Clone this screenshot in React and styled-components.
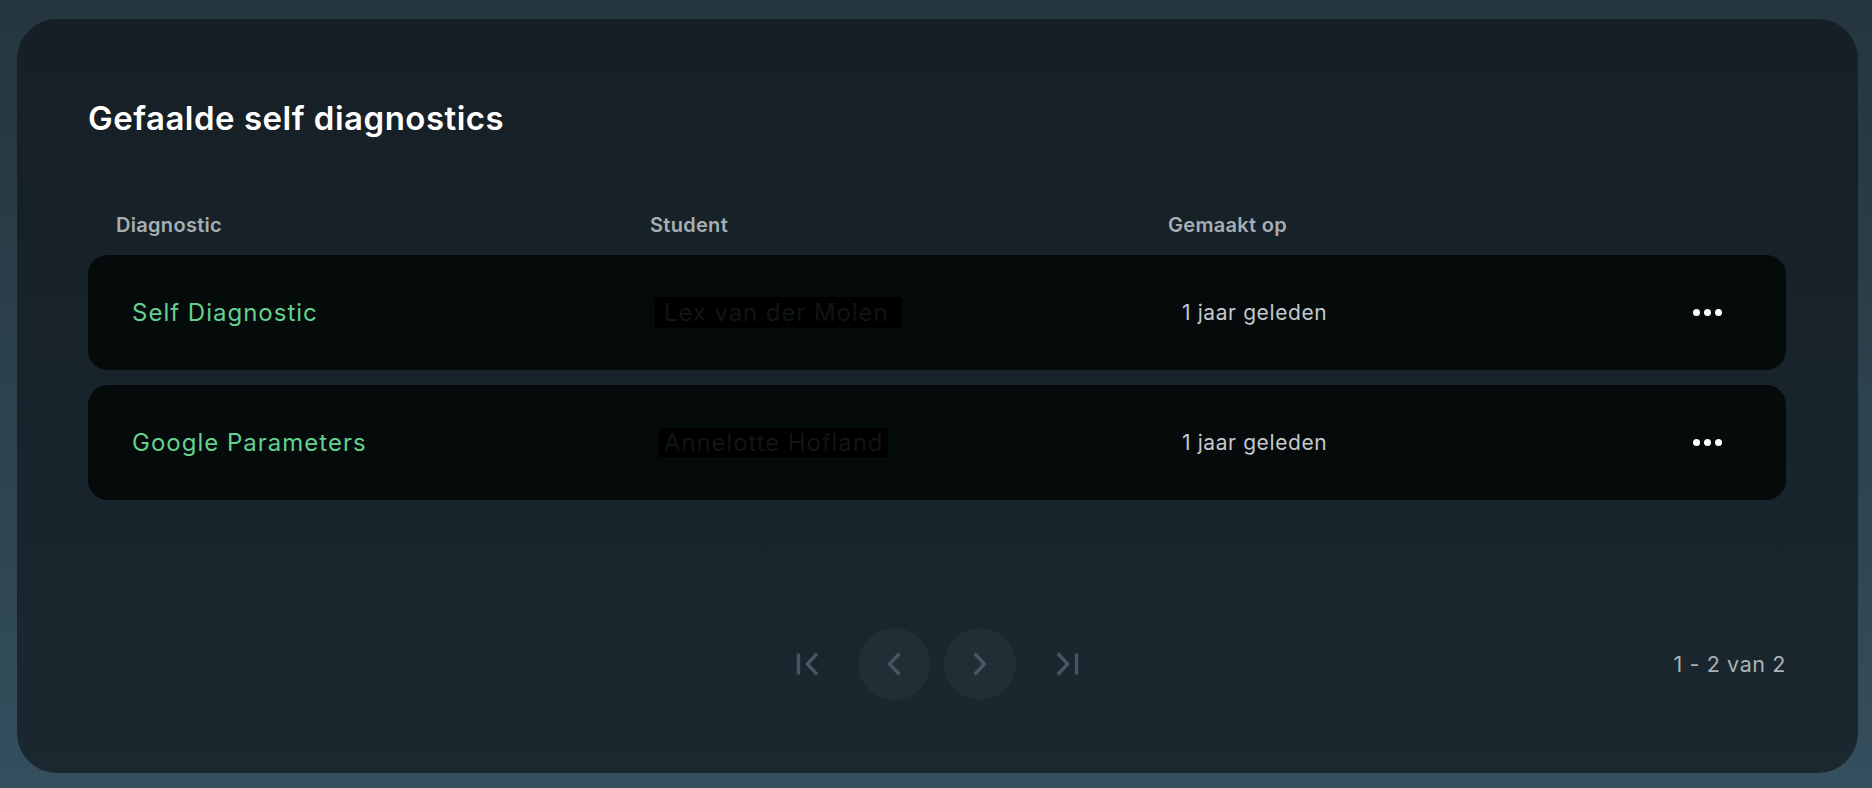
import React from "react";
import styled, { createGlobalStyle } from "styled-components";

const GlobalStyle = createGlobalStyle`
  html, body {
    margin: 0;
    padding: 0;
    height: 100%;
  }
  body {
    font-family: "Inter", "Noto Sans", sans-serif;
    background: linear-gradient(180deg, #25363f 0%, #2d4450 60%, #344f5e 100%);
  }
  #root {
    height: 100%;
  }
`;

const Page = styled.div`
  box-sizing: border-box;
  height: 788px;
  padding: 19px 14px 15px 17px;
  display: flex;
`;

const Card = styled.section`
  flex: 1;
  border-radius: 40px;
  background: linear-gradient(180deg, #161f25 0%, #18242b 55%, #1b2830 100%);
  padding: 80px 72px 73px 71px;
  display: flex;
  flex-direction: column;
`;

const Title = styled.h1`
  margin: 0;
  font-size: 33px;
  line-height: 38px;
  font-weight: 600;
  color: #ffffff;
  letter-spacing: 0.5px;
`;

const Columns = "562px 518px 1fr 120px";

const HeaderRow = styled.div`
  display: grid;
  grid-template-columns: ${Columns};
  margin-top: 77px;
  margin-bottom: 19px;
`;

const HeaderCell = styled.div`
  padding-left: ${(p) => p.$indent || 0}px;
  font-size: 20px;
  line-height: 22px;
  font-weight: 600;
  letter-spacing: 0.3px;
  color: #a6aeb2;
`;

const Rows = styled.div`
  display: flex;
  flex-direction: column;
  gap: 15px;
`;

const Row = styled.div`
  display: grid;
  grid-template-columns: ${Columns};
  align-items: center;
  height: 115px;
  border-radius: 20px;
  background: #050a0b;
`;

const NameCell = styled.div`
  padding-left: 44px;
  font-size: 24px;
  letter-spacing: 1px;
  color: #63d18f;
`;

const StudentCell = styled.div`
  padding-left: ${(p) => p.$indent}px;
`;

const Redacted = styled.span`
  display: inline-block;
  background: #000000;
  color: #101515;
  font-size: 24px;
  line-height: ${(p) => p.$h}px;
  letter-spacing: 0.9px;
  padding: 0 ${(p) => p.$right}px 0 ${(p) => p.$left}px;
`;

const DateCell = styled.div`
  padding-left: 14px;
  font-size: 21px;
  letter-spacing: 0.6px;
  color: #c3c9cc;
`;

const MoreButton = styled.button`
  justify-self: end;
  margin-right: 64px;
  border: 0;
  background: none;
  padding: 0;
  display: flex;
  gap: 4px;
  cursor: pointer;
`;

const Dot = styled.span`
  width: 7px;
  height: 7px;
  border-radius: 50%;
  background: #ffffff;
`;

const Footer = styled.div`
  margin-top: auto;
  display: grid;
  grid-template-columns: 1fr auto 1fr;
  align-items: center;
`;

const Pager = styled.div`
  grid-column: 2;
  display: flex;
  align-items: center;
`;

const EdgeButton = styled.button`
  border: 0;
  background: none;
  padding: 0;
  width: 24px;
  height: 24px;
  margin: ${(p) => (p.$first ? "0 38px 0 0" : "0 0 0 39px")};
  display: flex;
  align-items: center;
  justify-content: center;
  color: #475660;
`;

const RoundButton = styled.button`
  border: 0;
  padding: 0;
  width: 72px;
  height: 72px;
  border-radius: 50%;
  background: #212e36;
  margin-left: ${(p) => p.$gap || 0}px;
  display: flex;
  align-items: center;
  justify-content: center;
  color: #475660;
`;

const Count = styled.div`
  justify-self: end;
  font-size: 21.5px;
  letter-spacing: 0.6px;
  color: #aab2b6;
`;

const FirstIcon = () => (
  <svg width="24" height="24" viewBox="0 0 24 24" fill="none" stroke="currentColor" strokeWidth="3.4">
    <path d="M2.5 1.5v21" />
    <path d="M21 1.5 L11.5 12 L21 22.5" />
  </svg>
);

const LastIcon = () => (
  <svg width="24" height="24" viewBox="0 0 24 24" fill="none" stroke="currentColor" strokeWidth="3.4">
    <path d="M21.5 1.5v21" />
    <path d="M3 1.5 L12.5 12 L3 22.5" />
  </svg>
);

const Chevron = ({ dir }) => (
  <svg width="16" height="24" viewBox="0 0 16 24" fill="none" stroke="currentColor" strokeWidth="3.4">
    {dir === "left" ? <path d="M13.5 1.5 L3.5 12 L13.5 22.5" /> : <path d="M2.5 1.5 L12.5 12 L2.5 22.5" />}
  </svg>
);

const items = [
  { name: "Self Diagnostic", student: "Lex van der Molen", indent: 5, left: 9, right: 14, h: 31, date: "1 jaar geleden" },
  { name: "Google Parameters", student: "Annelotte Hofland", indent: 9, left: 5, right: 5, h: 29, date: "1 jaar geleden" },
];

export default function App() {
  return (
    <>
      <GlobalStyle />
      <Page>
        <Card>
          <Title>Gefaalde self diagnostics</Title>
          <HeaderRow>
            <HeaderCell $indent={28}>Diagnostic</HeaderCell>
            <HeaderCell>Student</HeaderCell>
            <HeaderCell>Gemaakt op</HeaderCell>
          </HeaderRow>
          <Rows>
            {items.map((it) => (
              <Row key={it.name}>
                <NameCell>{it.name}</NameCell>
                <StudentCell $indent={it.indent}>
                  <Redacted $left={it.left} $right={it.right} $h={it.h}>
                    {it.student}
                  </Redacted>
                </StudentCell>
                <DateCell>{it.date}</DateCell>
                <MoreButton aria-label="Meer">
                  <Dot />
                  <Dot />
                  <Dot />
                </MoreButton>
              </Row>
            ))}
          </Rows>
          <Footer>
            <Pager>
              <EdgeButton $first aria-label="Eerste">
                <FirstIcon />
              </EdgeButton>
              <RoundButton aria-label="Vorige">
                <Chevron dir="left" />
              </RoundButton>
              <RoundButton $gap={14} aria-label="Volgende">
                <Chevron dir="right" />
              </RoundButton>
              <EdgeButton aria-label="Laatste">
                <LastIcon />
              </EdgeButton>
            </Pager>
            <Count>1 - 2 van 2</Count>
          </Footer>
        </Card>
      </Page>
    </>
  );
}
